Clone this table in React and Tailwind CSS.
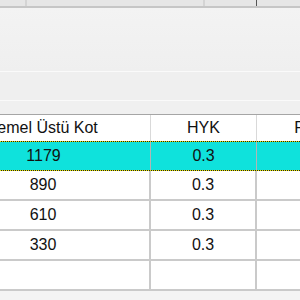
export default function App() {
  const rows = [
    { a: "890", b: "0.3" },
    { a: "610", b: "0.3" },
    { a: "330", b: "0.3" },
    { a: "", b: "" },
  ];
  return (
    <div className="w-[300px] h-[300px] overflow-hidden bg-[#f0f0f0] flex flex-col font-['Liberation_Sans',Arial,sans-serif] text-[16px] text-[#111]">
      {/* top toolbar strip */}
      <div className="h-[8px] shrink-0 flex bg-[#e6e6e6] border-b-2 border-[#c6c6c6]">
        <div className="w-[27px] border-r-2 border-[#d4d4d4]" />
        <div className="w-[178px] border-r-2 border-[#d4d4d4]" />
        <div className="w-[52px] border-r border-[#555]" />
        <div className="flex-1" />
      </div>
      {/* panel area */}
      <div className="h-[64px] shrink-0 bg-gradient-to-b from-[#f3f3f3] to-[#efefef] border-b border-[#fafafa]" />
      <div className="h-[29px] shrink-0 bg-[#efefef] border-b border-[#fafafa]" />
      <div className="h-[14px] shrink-0 bg-[#f0f0f0] border-b border-[#a5a5a5]" />
      {/* grid */}
      <div className="flex flex-col ml-[-63px] w-[424px] bg-white">
        <div className="h-[26px] flex items-center bg-white">
          <div className="w-[214px] h-full flex items-center justify-center border-r border-[#d9d9d9]">Temel Üstü Kot</div>
          <div className="w-[106px] h-full flex items-center justify-center border-r border-[#d9d9d9]">HYK</div>
          <div className="flex-1 h-full flex items-center justify-center pl-[8px]">Renk</div>
        </div>
        <div className="flex flex-col">
          <div className="h-px bg-[repeating-linear-gradient(90deg,#222_0_1px,#e8e800_1px_2px)]" />
          <div className="h-[28px] flex bg-[#0fe2dc]">
            <div className="w-[214px] flex items-center justify-center border-r border-[#b4b4b4]">1179</div>
            <div className="w-[106px] flex items-center justify-center border-r border-[#b4b4b4]">0.3</div>
            <div className="flex-1" />
          </div>
          <div className="h-px bg-[repeating-linear-gradient(90deg,#222_0_1px,#e8e800_1px_2px)]" />
        </div>
        {rows.map((r, i) => (
          <div key={i} className="h-[30px] flex border-b-2 border-[#cacaca] bg-white">
            <div className="w-[214px] flex items-center justify-center border-r-2 border-[#cacaca]">{r.a}</div>
            <div className="w-[106px] flex items-center justify-center border-r-2 border-[#cacaca]">{r.b}</div>
            <div className="flex-1" />
          </div>
        ))}
      </div>
      <div className="flex-1 bg-[#f4f4f4]" />
    </div>
  );
}
